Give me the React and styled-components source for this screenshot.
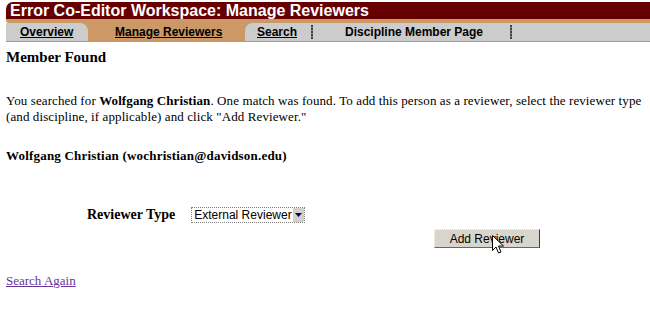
import React from 'react'
import styled, { createGlobalStyle } from 'styled-components'

const GlobalStyle = createGlobalStyle`
  html, body {
    margin: 0;
    padding: 0;
    background: #ffffff;
  }
  body {
    font-family: 'Liberation Serif', 'Times New Roman', serif;
    color: #000000;
  }
`

const Page = styled.div`
  width: 650px;
  height: 314px;
  padding: 2px 0 0 6px;
  box-sizing: border-box;
  overflow: hidden;
`

const TitleBar = styled.div`
  height: 17px;
  background: #660000;
  border-radius: 7px 0 0 0;
  padding-left: 4px;
  display: flex;
  align-items: center;
  font-family: 'Liberation Sans', Arial, sans-serif;
  font-weight: bold;
  font-size: 16px;
  color: #ffffff;
`

const Strip = styled.div`
  height: 4px;
  background: #cc9966;
  border-radius: 0 0 0 3px;
`

const TabRow = styled.div`
  display: flex;
  height: 18px;
  background: #cc9966;
  border-bottom: 1px dotted #999999;
`

const Tab = styled.div`
  width: ${p => p.width}px;
  display: flex;
  align-items: center;
  padding-left: ${p => p.indent || 0}px;
  box-sizing: border-box;
  background: ${p => (p.active ? '#cc9966' : '#cccccc')};
  border-radius: ${p => p.radius || '0'};
  font-family: 'Liberation Sans', Arial, sans-serif;
  font-weight: bold;
  font-size: 12px;
  color: #000000;
  white-space: nowrap;
  text-decoration: ${p => (p.plain ? 'none' : 'underline')};
`

const Filler = styled.div`
  flex: 1;
  background: #cccccc;
`

const Separator = styled.div`
  width: 2px;
  background: #cccccc;
  display: flex;
  align-items: center;

  &::before {
    content: '';
    width: 2px;
    height: 14px;
    background: repeating-linear-gradient(#444444 0 2px, #888888 2px 3px);
  }
`

const Heading = styled.h1`
  margin: 7px 0 0;
  font-size: 15px;
  font-weight: bold;
  line-height: 16px;
`

const Text = styled.p`
  margin: ${p => p.top || 0}px 0 0;
  width: 644px;
  font-size: 13px;
  line-height: 16px;
  letter-spacing: ${p => (p.bold ? '0.2px' : '0.1px')};
  font-weight: ${p => (p.bold ? 'bold' : 'normal')};
`

const FormRow = styled.div`
  display: flex;
  align-items: center;
  gap: 16px;
  margin-top: 43px;
  padding-left: 81px;
`

const Label = styled.span`
  font-size: 14px;
  font-weight: bold;
`

const Select = styled.div`
  width: 114px;
  height: 16px;
  box-sizing: border-box;
  display: flex;
  align-items: stretch;
  background: #ffffff;
  border: 1px dotted #808080;
  font-family: 'Liberation Sans', Arial, sans-serif;
  font-size: 12px;
`

const SelectValue = styled.span`
  flex: 1;
  padding-left: 2px;
  line-height: 14px;
  white-space: nowrap;
`

const SelectArrow = styled.span`
  width: 12px;
  background: #d4d0c8;
  border-left: 1px solid #ffffff;
  display: flex;
  align-items: center;
  justify-content: center;
`

const ButtonRow = styled.div`
  padding-left: 428px;
  margin-top: 6px;
`

const Button = styled.div`
  position: relative;
  width: 106px;
  height: 19px;
  box-sizing: border-box;
  display: flex;
  align-items: center;
  justify-content: center;
  background: #d8d6cc;
  border-top: 1px dotted #ffffff;
  border-left: 1px dotted #ffffff;
  border-right: 1px solid #553333;
  border-bottom: 1px solid #666666;
  font-family: 'Liberation Sans', Arial, sans-serif;
  font-size: 12px;
`

const Cursor = styled.svg`
  position: absolute;
  left: 57px;
  top: 5px;
`

const Link = styled.a`
  display: inline-block;
  margin-top: 25px;
  font-size: 13px;
  color: #663399;
  text-decoration: underline;
`

export default function App() {
  return (
    <>
      <GlobalStyle />
      <Page>
        <TitleBar>Error Co-Editor Workspace: Manage Reviewers</TitleBar>
        <Strip />
        <TabRow>
          <Tab width={82} indent={14} radius="0 8px 0 0">Overview</Tab>
          <Tab width={157} active indent={27}>Manage Reviewers</Tab>
          <Tab width={66} indent={12} radius="8px 0 0 0">Search</Tab>
          <Separator />
          <Tab width={197} indent={32} plain>Discipline Member Page</Tab>
          <Separator />
          <Filler />
        </TabRow>

        <Heading>Member Found</Heading>
        <Text top={28}>
          You searched for <b>Wolfgang Christian</b>. One match was found. To add this person as a
          reviewer, select the reviewer type (and discipline, if applicable) and click "Add Reviewer."
        </Text>
        <Text top={23} bold>Wolfgang Christian (wochristian@davidson.edu)</Text>

        <FormRow>
          <Label>Reviewer Type</Label>
          <Select>
            <SelectValue>External Reviewer</SelectValue>
            <SelectArrow>
              <svg width="7" height="4" viewBox="0 0 7 4">
                <path d="M0 0h7L3.5 4z" fill="#000066" />
              </svg>
            </SelectArrow>
          </Select>
        </FormRow>

        <ButtonRow>
          <Button>
            Add Reviewer
            <Cursor width="12" height="19" viewBox="0 0 12 19">
              <path
                d="M0.5 0.5v15l3.5-3.5 2.5 6 2.5-1-2.5-6h5z"
                fill="#ffffff"
                stroke="#000000"
                strokeWidth="1"
              />
            </Cursor>
          </Button>
        </ButtonRow>

        <Link href="#">Search Again</Link>
      </Page>
    </>
  )
}
